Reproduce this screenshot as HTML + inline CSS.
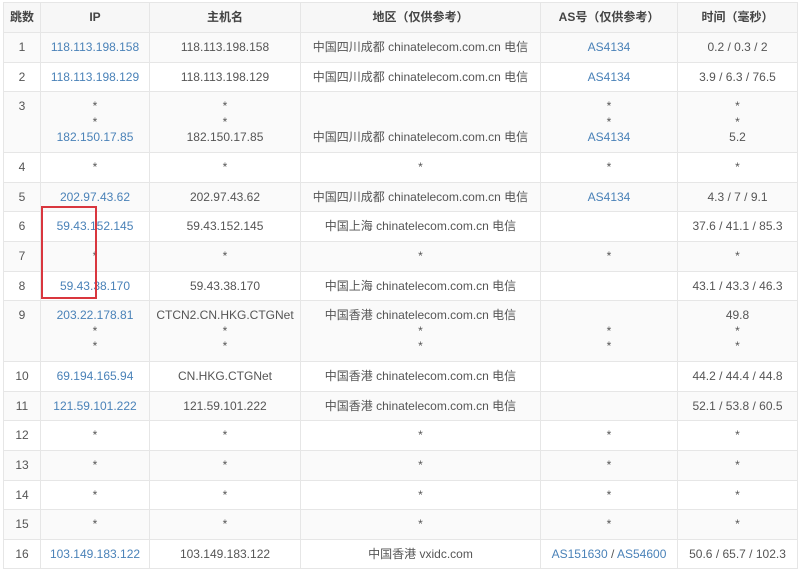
<!DOCTYPE html><html><head><meta charset="utf-8"><style>
body{margin:0;background:#fff;width:800px;height:573px;overflow:hidden;font-family:"Liberation Sans","Noto Sans CJK SC",sans-serif;font-size:12px;color:#555}
table{border-collapse:collapse;position:absolute;left:3px;top:2px;table-layout:fixed}
td,th{border:1px solid #e6e6e6;text-align:center;vertical-align:top;padding:7px 0 0;line-height:15.5px;box-sizing:border-box}
th{background:#f7f7f7;font-weight:bold;color:#444;height:30px;vertical-align:middle;padding:0}
tr.r td{height:29.6px}
tr.m td{height:61px}
tr:nth-child(even) td{background:#fafafa}
.b{color:#4a82b8}
#box{position:absolute;left:41px;top:206px;width:52px;height:89px;border:2px solid #d9363e}
</style></head><body>
<table>
<colgroup><col style="width:37px"><col style="width:109px"><col style="width:151px"><col style="width:240px"><col style="width:137px"><col style="width:120px"></colgroup>
<tr><th>跳数</th><th>IP</th><th>主机名</th><th>地区（仅供参考）</th><th>AS号（仅供参考）</th><th>时间（毫秒）</th></tr>
<tr class="r"><td>1</td><td class="b">118.113.198.158</td><td>118.113.198.158</td><td>中国四川成都 chinatelecom.com.cn 电信</td><td class="b">AS4134</td><td>0.2 / 0.3 / 2</td></tr>
<tr class="r"><td>2</td><td class="b">118.113.198.129</td><td>118.113.198.129</td><td>中国四川成都 chinatelecom.com.cn 电信</td><td class="b">AS4134</td><td>3.9 / 6.3 / 76.5</td></tr>
<tr class="m"><td>3</td><td>*<br>*<br><span class="b">182.150.17.85</span></td><td>*<br>*<br>182.150.17.85</td><td><br><br>中国四川成都 chinatelecom.com.cn 电信</td><td>*<br>*<br><span class="b">AS4134</span></td><td>*<br>*<br>5.2</td></tr>
<tr class="r"><td>4</td><td>*</td><td>*</td><td>*</td><td>*</td><td>*</td></tr>
<tr class="r"><td>5</td><td class="b">202.97.43.62</td><td>202.97.43.62</td><td>中国四川成都 chinatelecom.com.cn 电信</td><td class="b">AS4134</td><td>4.3 / 7 / 9.1</td></tr>
<tr class="r"><td>6</td><td class="b">59.43.152.145</td><td>59.43.152.145</td><td>中国上海 chinatelecom.com.cn 电信</td><td></td><td>37.6 / 41.1 / 85.3</td></tr>
<tr class="r"><td>7</td><td>*</td><td>*</td><td>*</td><td>*</td><td>*</td></tr>
<tr class="r"><td>8</td><td class="b">59.43.38.170</td><td>59.43.38.170</td><td>中国上海 chinatelecom.com.cn 电信</td><td></td><td>43.1 / 43.3 / 46.3</td></tr>
<tr class="m"><td>9</td><td><span class="b">203.22.178.81</span><br>*<br>*</td><td>CTCN2.CN.HKG.CTGNet<br>*<br>*</td><td>中国香港 chinatelecom.com.cn 电信<br>*<br>*</td><td><br>*<br>*</td><td>49.8<br>*<br>*</td></tr>
<tr class="r"><td>10</td><td class="b">69.194.165.94</td><td>CN.HKG.CTGNet</td><td>中国香港 chinatelecom.com.cn 电信</td><td></td><td>44.2 / 44.4 / 44.8</td></tr>
<tr class="r"><td>11</td><td class="b">121.59.101.222</td><td>121.59.101.222</td><td>中国香港 chinatelecom.com.cn 电信</td><td></td><td>52.1 / 53.8 / 60.5</td></tr>
<tr class="r"><td>12</td><td>*</td><td>*</td><td>*</td><td>*</td><td>*</td></tr>
<tr class="r"><td>13</td><td>*</td><td>*</td><td>*</td><td>*</td><td>*</td></tr>
<tr class="r"><td>14</td><td>*</td><td>*</td><td>*</td><td>*</td><td>*</td></tr>
<tr class="r"><td>15</td><td>*</td><td>*</td><td>*</td><td>*</td><td>*</td></tr>
<tr class="r"><td>16</td><td class="b">103.149.183.122</td><td>103.149.183.122</td><td>中国香港 vxidc.com</td><td><span class="b">AS151630</span> / <span class="b">AS54600</span></td><td>50.6 / 65.7 / 102.3</td></tr>
</table>
<div id="box"></div>
</body></html>
